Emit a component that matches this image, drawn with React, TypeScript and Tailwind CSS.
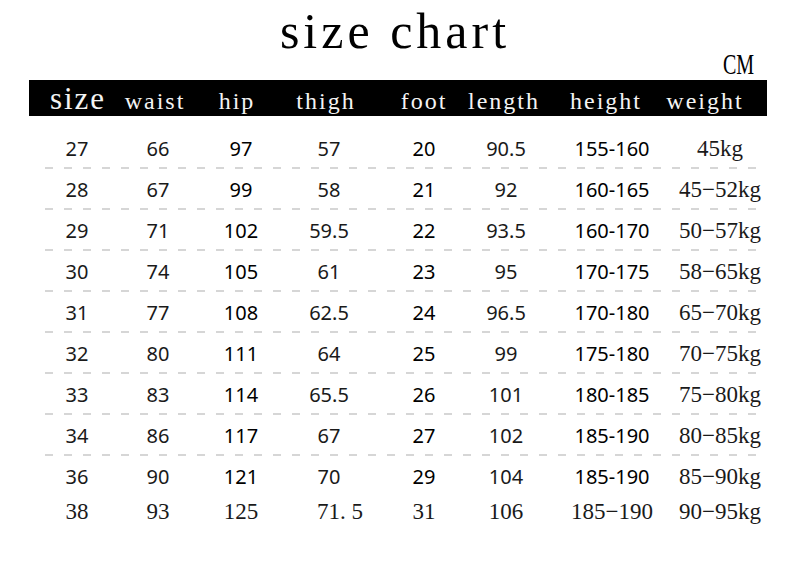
const HEAD = ['size', 'waist', 'hip', 'thigh', 'foot', 'length', 'height', 'weight'];

const ROWS = [
  ['27', '66', '97', '57', '20', '90.5', '155-160', '45kg'],
  ['28', '67', '99', '58', '21', '92', '160-165', '45−52kg'],
  ['29', '71', '102', '59.5', '22', '93.5', '160-170', '50−57kg'],
  ['30', '74', '105', '61', '23', '95', '170-175', '58−65kg'],
  ['31', '77', '108', '62.5', '24', '96.5', '170-180', '65−70kg'],
  ['32', '80', '111', '64', '25', '99', '175-180', '70−75kg'],
  ['33', '83', '114', '65.5', '26', '101', '180-185', '75−80kg'],
  ['34', '86', '117', '67', '27', '102', '185-190', '80−85kg'],
  ['36', '90', '121', '70', '29', '104', '185-190', '85−90kg'],
];

const LAST = ['38', '93', '125', '71. 5', '31', '106', '185−190', '90−95kg'];

const serif = "font-['Liberation_Serif','Times_New_Roman',serif]";
const sans = "font-['Noto_Sans','Open_Sans',sans-serif]";
const dataCols = 'grid grid-cols-[94px_68px_98px_78px_112px_52px_160px_56px] pl-[30px]';
const darker = [false, false, true, false, true, false, true, false];

function Divider() {
  return (
    <div className="ml-[45px] h-[2px] w-[712px] bg-[linear-gradient(to_right,#d6d6d6_8px,transparent_8px)] bg-[length:19px_2px] bg-repeat-x" />
  );
}

export default function App() {
  return (
    <div className="flex h-[579px] w-[790px] flex-col bg-white text-[#1a1a1a]">
      <div className={`pt-[8px] text-center text-[50px] leading-[46px] tracking-[4px] text-black ${serif}`}>
        size chart
      </div>
      <div className="flex justify-end pr-[36px]">
        <span className={`inline-block origin-right scale-x-[0.69] text-[29px] leading-[20px] text-black ${serif}`}>
          CM
        </span>
      </div>

      <div className={`ml-[29px] mt-[6px] grid h-[36px] w-[738px] grid-cols-[98px_56px_108px_70px_126px_34px_170px_28px] bg-black pt-[6px] text-[#f4f4f4] ${serif}`}>
        {HEAD.map((h, i) => (
          <div
            key={h}
            className={`flex justify-center whitespace-nowrap tracking-[2px] ${
              i === 0 ? 'text-[31px] leading-[25px]' : 'text-[24px] leading-[30px]'
            }`}
          >
            {h}
          </div>
        ))}
      </div>

      <div className="mt-[12px] flex flex-col">
        {ROWS.map((row, r) => (
          <div key={r}>
            <div className={`h-[39px] pt-[2px] ${dataCols}`}>
              {row.map((v, c) => (
                <div
                  key={c}
                  className={`flex justify-center whitespace-nowrap leading-[37px] ${
                    c === 7 ? `text-[23px] ${serif}` : `text-[20px] ${sans} ${darker[c] ? 'text-black' : ''}`
                  }`}
                >
                  {v}
                </div>
              ))}
            </div>
            {r < ROWS.length - 1 && <Divider />}
          </div>
        ))}
        <div className={`mt-[2px] h-[30px] ${dataCols} ${serif}`}>
          {LAST.map((v, c) => (
            <div
              key={c}
              className={`flex justify-center whitespace-nowrap text-[23px] leading-[30px] ${c === 3 ? 'pl-[22px]' : ''}`}
            >
              {v}
            </div>
          ))}
        </div>
      </div>
    </div>
  );
}
